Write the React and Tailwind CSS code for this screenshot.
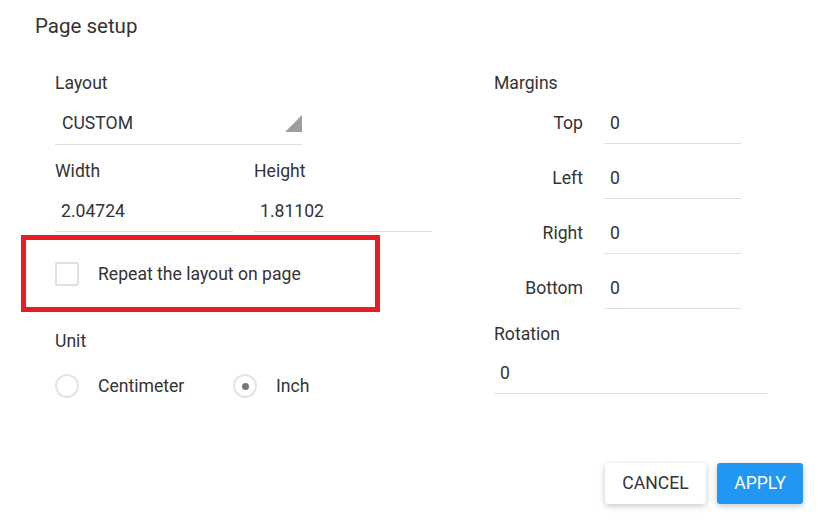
import React from "react";

function Field({ value, className = "" }) {
  return (
    <div className={`h-[51px] border-b border-[#e0e0e0] pt-[20px] pl-[6px] leading-[20px] ${className}`}>
      {value}
    </div>
  );
}

function MarginRow({ label, value, first }) {
  return (
    <div className={`flex ${first ? "" : "mt-[4px]"}`}>
      <div className="w-[89px] pt-[20px] text-right leading-[20px]">{label}</div>
      <Field value={value} className="ml-[21px] w-[137px]" />
    </div>
  );
}

function Radio({ checked, label, className = "" }) {
  return (
    <div className={`flex items-center ${className}`}>
      <span className="flex h-[24px] w-[24px] items-center justify-center rounded-full border-2 border-[#e4e4e4] bg-white">
        {checked && <span className="h-[7px] w-[7px] rounded-full bg-[#757575]" />}
      </span>
      <span className="ml-[19px] leading-[20px]">{label}</span>
    </div>
  );
}

export default function App() {
  return (
    <div
      className="relative flex h-[521px] w-[818px] flex-col bg-white text-[17.6px] text-[#333]"
      style={{ fontFamily: "Roboto, 'Liberation Sans', sans-serif" }}
    >
      <h1 className="pl-[35px] pt-[13px] text-[20.5px] leading-[26px] font-normal">Page setup</h1>

      <div className="mt-[34px] flex pl-[55px]">
        {/* left column */}
        <div className="w-[439px]">
          <div className="leading-[20px]">Layout</div>
          <div className="flex h-[52px] w-[247px] justify-between border-b border-[#e0e0e0] pt-[20px] pl-[7px] leading-[20px]">
            <span>CUSTOM</span>
            <svg width="17" height="17" viewBox="0 0 17 17" className="mt-[2px]">
              <polygon points="17,0 17,17 0,17" fill="#9e9e9e" />
            </svg>
          </div>

          <div className="mt-[16px] flex gap-[21px]">
            <div className="w-[178px]">
              <div className="leading-[20px]">Width</div>
              <Field value="2.04724" />
            </div>
            <div className="w-[178px]">
              <div className="leading-[20px]">Height</div>
              <Field value="1.81102" />
            </div>
          </div>

          <div className="-ml-[34px] mt-[3px] flex h-[77px] w-[359px] items-center border-[5px] border-[#e31e24] pl-[29px]">
            <span className="h-[24px] w-[24px] rounded-[2px] border-2 border-[#e0e0e0] bg-white" />
            <span className="ml-[19px] leading-[20px]">Repeat the layout on page</span>
          </div>

          <div className="mt-[19px] leading-[20px]">Unit</div>
          <div className="mt-[23px] flex">
            <Radio label="Centimeter" className="w-[178px]" />
            <Radio label="Inch" checked />
          </div>
        </div>

        {/* right column */}
        <div className="w-[273px]">
          <div className="leading-[20px]">Margins</div>
          <MarginRow label="Top" value="0" first />
          <MarginRow label="Left" value="0" />
          <MarginRow label="Right" value="0" />
          <MarginRow label="Bottom" value="0" />

          <div className="mt-[15px] leading-[20px]">Rotation</div>
          <div className="h-[50px] border-b border-[#e0e0e0] pt-[19px] pl-[6px] leading-[20px]">0</div>
        </div>
      </div>

      <div className="mt-auto flex justify-end gap-[11px] pb-[17px] pr-[15px]">
        <button className="h-[41px] w-[101px] rounded-[3px] bg-white text-[17.6px] text-[#333] shadow-[0_2px_6px_rgba(0,0,0,0.22)]">
          CANCEL
        </button>
        <button className="h-[41px] w-[86px] rounded-[3px] bg-[#2196f3] text-[17.6px] text-white shadow-[0_2px_6px_rgba(0,0,0,0.22)]">
          APPLY
        </button>
      </div>
    </div>
  );
}
